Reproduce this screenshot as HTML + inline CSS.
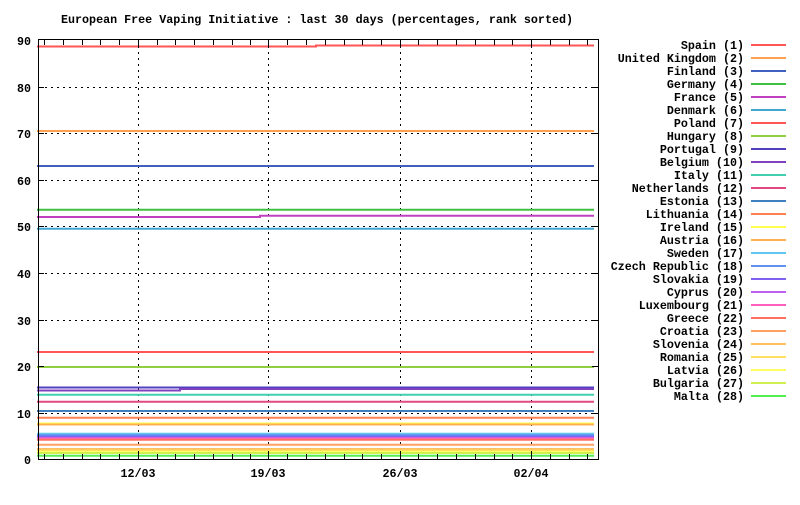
<!DOCTYPE html>
<html><head><meta charset="utf-8"><style>
html,body{margin:0;padding:0;background:#fff;}
svg text{font-family:"Liberation Mono","DejaVu Sans Mono",monospace;font-weight:bold;font-size:11.7px;fill:#000;}
</style></head><body>
<svg width="800" height="500" xmlns="http://www.w3.org/2000/svg" shape-rendering="crispEdges">
<text x="317" y="23" text-anchor="middle">European Free Vaping Initiative : last 30 days (percentages, rank sorted)</text>
<g stroke="#000" stroke-width="1" stroke-dasharray="2,4" fill="none">
<path d="M39 413.5H598M39 366.5H598M39 320.5H598M39 273.5H598M39 226.5H598M39 180.5H598M39 133.5H598M39 87.5H598"/>
<path d="M138.5 40V459M268.5 40V459M400.5 40V459M531.5 40V459"/>
</g>
<g text-anchor="end">
<text x="31" y="464">0</text><text x="31" y="418">10</text><text x="31" y="371">20</text><text x="31" y="325">30</text><text x="31" y="278">40</text><text x="31" y="231">50</text><text x="31" y="185">60</text><text x="31" y="138">70</text><text x="31" y="92">80</text><text x="31" y="45">90</text>
</g>
<g text-anchor="middle">
<text x="138" y="477">12/03</text><text x="268" y="477">19/03</text><text x="400" y="477">26/03</text><text x="531" y="477">02/04</text>
</g>
<g stroke-width="2" fill="none" shape-rendering="auto">
<path stroke="#ff5555" d="M37 46.5H316V45.5H594"/>
<path stroke="#ffa050" d="M37 131H594"/>
<path stroke="#4060c0" d="M37 166H594"/>
<path stroke="#40c040" d="M37 209.7H594"/>
<path stroke="#c040c0" d="M37 217H260V215.7H594"/>
<path stroke="#40a8d0" d="M37 228.7H594"/>
<path stroke="#ff5555" d="M37 352H594"/>
<path stroke="#90d040" d="M37 367H594"/>
<path stroke="#5040c0" d="M37 387.5H594"/>
<path stroke="#8040c0" d="M37 390.5H180V389H594"/>
<path stroke="#40d0b0" d="M37 394.7H594"/>
<path stroke="#e04880" d="M37 401.7H594"/>
<path stroke="#4080c0" d="M37 411H594"/>
<path stroke="#ff8050" d="M37 417.7H594"/>
<path stroke="#ffff50" d="M37 423.5H594"/>
<path stroke="#ffb050" d="M37 424.5H594"/>
<path stroke="#60c8f0" d="M37 433.7H594"/>
<path stroke="#6090f0" d="M37 435.3H594"/>
<path stroke="#8060f0" d="M37 436.7H594"/>
<path stroke="#c060f0" d="M37 438H594"/>
<path stroke="#ff60c0" d="M37 438.8H594"/>
<path stroke="#ff7060" d="M37 439.8H594"/>
<path stroke="#ffa060" d="M37 444.7H594"/>
<path stroke="#ffc060" d="M37 449H594"/>
<path stroke="#ffe060" d="M37 450.7H594"/>
<path stroke="#ffff60" d="M37 452H594"/>
<path stroke="#d0f050" d="M37 453H594"/>
<path stroke="#50f050" d="M37 455.7H594"/>
</g>
<g stroke="#000" stroke-width="1" fill="none">
<rect x="38.5" y="39.5" width="560" height="420"/>
<path d="M38 413.5h6M38 366.5h6M38 320.5h6M38 273.5h6M38 226.5h6M38 180.5h6M38 133.5h6M38 87.5h6M598 413.5h-6M598 366.5h-6M598 320.5h-6M598 273.5h-6M598 226.5h-6M598 180.5h-6M598 133.5h-6M598 87.5h-6"/>
<path d="M44.5 459v-5M63.5 459v-5M82.5 459v-5M100.5 459v-5M119.5 459v-5M138.5 459v-8M157.5 459v-5M175.5 459v-5M194.5 459v-5M213.5 459v-5M232.5 459v-5M250.5 459v-5M268.5 459v-8M287.5 459v-5M306.5 459v-5M325.5 459v-5M344.5 459v-5M362.5 459v-5M381.5 459v-5M400.5 459v-8M418.5 459v-5M437.5 459v-5M456.5 459v-5M475.5 459v-5M494.5 459v-5M512.5 459v-5M531.5 459v-8M550.5 459v-5M569.5 459v-5M587.5 459v-5"/>
<path d="M44.5 40v5M63.5 40v5M82.5 40v5M100.5 40v5M119.5 40v5M138.5 40v8M157.5 40v5M175.5 40v5M194.5 40v5M213.5 40v5M232.5 40v5M250.5 40v5M268.5 40v8M287.5 40v5M306.5 40v5M325.5 40v5M344.5 40v5M362.5 40v5M381.5 40v5M400.5 40v8M418.5 40v5M437.5 40v5M456.5 40v5M475.5 40v5M494.5 40v5M512.5 40v5M531.5 40v8M550.5 40v5M569.5 40v5M587.5 40v5"/>
</g>
<g text-anchor="end">
<text x="744" y="49">Spain (1)</text>
<text x="744" y="62">United Kingdom (2)</text>
<text x="744" y="75">Finland (3)</text>
<text x="744" y="88">Germany (4)</text>
<text x="744" y="101">France (5)</text>
<text x="744" y="114">Denmark (6)</text>
<text x="744" y="127">Poland (7)</text>
<text x="744" y="140">Hungary (8)</text>
<text x="744" y="153">Portugal (9)</text>
<text x="744" y="166">Belgium (10)</text>
<text x="744" y="179">Italy (11)</text>
<text x="744" y="192">Netherlands (12)</text>
<text x="744" y="205">Estonia (13)</text>
<text x="744" y="218">Lithuania (14)</text>
<text x="744" y="231">Ireland (15)</text>
<text x="744" y="244">Austria (16)</text>
<text x="744" y="257">Sweden (17)</text>
<text x="744" y="270">Czech Republic (18)</text>
<text x="744" y="283">Slovakia (19)</text>
<text x="744" y="296">Cyprus (20)</text>
<text x="744" y="309">Luxembourg (21)</text>
<text x="744" y="322">Greece (22)</text>
<text x="744" y="335">Croatia (23)</text>
<text x="744" y="348">Slovenia (24)</text>
<text x="744" y="361">Romania (25)</text>
<text x="744" y="374">Latvia (26)</text>
<text x="744" y="387">Bulgaria (27)</text>
<text x="744" y="400">Malta (28)</text>
</g>
<g stroke-width="2">
<path stroke="#ff5555" d="M751 45h35"/>
<path stroke="#ffa050" d="M751 58h35"/>
<path stroke="#4060c0" d="M751 71h35"/>
<path stroke="#40c040" d="M751 84h35"/>
<path stroke="#c040c0" d="M751 97h35"/>
<path stroke="#40a8d0" d="M751 110h35"/>
<path stroke="#ff5555" d="M751 123h35"/>
<path stroke="#90d040" d="M751 136h35"/>
<path stroke="#5040c0" d="M751 149h35"/>
<path stroke="#8040c0" d="M751 162h35"/>
<path stroke="#40d0b0" d="M751 175h35"/>
<path stroke="#e04880" d="M751 188h35"/>
<path stroke="#4080c0" d="M751 201h35"/>
<path stroke="#ff8050" d="M751 214h35"/>
<path stroke="#ffff50" d="M751 227h35"/>
<path stroke="#ffb050" d="M751 240h35"/>
<path stroke="#60c8f0" d="M751 253h35"/>
<path stroke="#6090f0" d="M751 266h35"/>
<path stroke="#8060f0" d="M751 279h35"/>
<path stroke="#c060f0" d="M751 292h35"/>
<path stroke="#ff60c0" d="M751 305h35"/>
<path stroke="#ff7060" d="M751 318h35"/>
<path stroke="#ffa060" d="M751 331h35"/>
<path stroke="#ffc060" d="M751 344h35"/>
<path stroke="#ffe060" d="M751 357h35"/>
<path stroke="#ffff60" d="M751 370h35"/>
<path stroke="#d0f050" d="M751 383h35"/>
<path stroke="#50f050" d="M751 396h35"/>
</g>
</svg>
</body></html>
